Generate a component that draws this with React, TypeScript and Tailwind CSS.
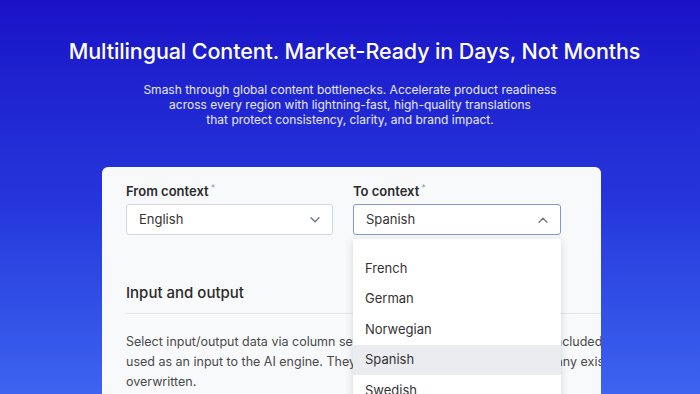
import React from "react";

const languages = ["French", "German", "Norwegian", "Spanish", "Swedish", "Turkish"];

const Chevron = ({ up }: { up?: boolean }) => (
  <svg width="10" height="6" viewBox="0 0 10 6" fill="none" className="text-gray-500">
    <path
      d={up ? "M1 5.2 L5 1.2 L9 5.2" : "M1 0.8 L5 4.8 L9 0.8"}
      stroke="currentColor"
      strokeWidth="1.3"
      strokeLinecap="round"
      strokeLinejoin="round"
    />
  </svg>
);

const Label = ({ children }: { children: React.ReactNode }) => (
  <div className="flex items-start h-[16px] mb-[5px]">
    <span className="text-[13px] leading-[16px] font-semibold text-[#2b2b2b]">{children}</span>
    <span className="text-[9px] leading-[10px] text-gray-400 ml-[2px]">*</span>
  </div>
);

export default function App() {
  return (
    <div
      className="relative h-[394px] w-[700px] overflow-hidden bg-gradient-to-b from-[#1a11c7] via-[#2634db] to-[#3d63ef]"
      style={{ fontFamily: "Inter, 'Open Sans', sans-serif" }}
    >
      {/* Hero */}
      <div className="pt-[37px] text-center text-white">
        <h1 className="pl-[9px] text-[21.5px] leading-[28px] font-medium tracking-[-0.1px]">
          Multilingual Content. Market-Ready in Days, Not Months
        </h1>
        <p className="mt-[17px] text-[12px] leading-[15px] text-white/90">
          Smash through global content bottlenecks. Accelerate product readiness
          <br />
          across every region with lightning-fast, high-quality translations
          <br />
          that protect consistency, clarity, and brand impact.
        </p>
      </div>

      {/* Card */}
      <div className="absolute left-[102px] top-[167px] w-[499px] h-[260px] rounded-[6px] bg-[#f8f9fb] overflow-hidden">
        <div className="w-[620px] pl-[24px] pt-[16px]">
          <div className="flex gap-[20px]">
            <div className="w-[207px]">
              <Label>From context</Label>
              <div className="h-[31px] flex items-center justify-between px-[12px] bg-white border border-[#d4d7dd] rounded-[3px]">
                <span className="text-[13px] text-[#333]">English</span>
                <Chevron />
              </div>
            </div>
            <div className="w-[208px]">
              <Label>To context</Label>
              <div className="h-[31px] flex items-center justify-between px-[12px] bg-white border border-[#7f98d4] rounded-[3px]">
                <span className="text-[13px] text-[#333]">Spanish</span>
                <Chevron up />
              </div>
            </div>
          </div>

          <h2 className="mt-[48px] text-[15px] leading-[20px] font-medium text-[#2b2b2b]">Input and output</h2>
          <div className="mt-[10px] h-px bg-[#e3e5ea] w-[560px]" />
          <div className="mt-[18px] text-[12.5px] leading-[20px] text-[#4a4a4a] whitespace-nowrap">
            <div>Select input/output data via column settings. Only the column shown as included will be</div>
            <div>used as an input to the AI engine. They will be written to the outputs and any existing data will be</div>
            <div>overwritten.</div>
          </div>
        </div>

        {/* Dropdown */}
        <div className="absolute left-[251px] top-[72px] w-[208px] bg-white rounded-[3px] shadow-[0_2px_8px_rgba(0,0,0,0.15)] pt-[14px]">
          {languages.map((lang) => (
            <div
              key={lang}
              className={`h-[30.5px] flex items-center px-[12px] text-[13px] text-[#333] ${
                lang === "Spanish" ? "bg-[#ebecef]" : ""
              }`}
            >
              {lang}
            </div>
          ))}
        </div>
      </div>
    </div>
  );
}
